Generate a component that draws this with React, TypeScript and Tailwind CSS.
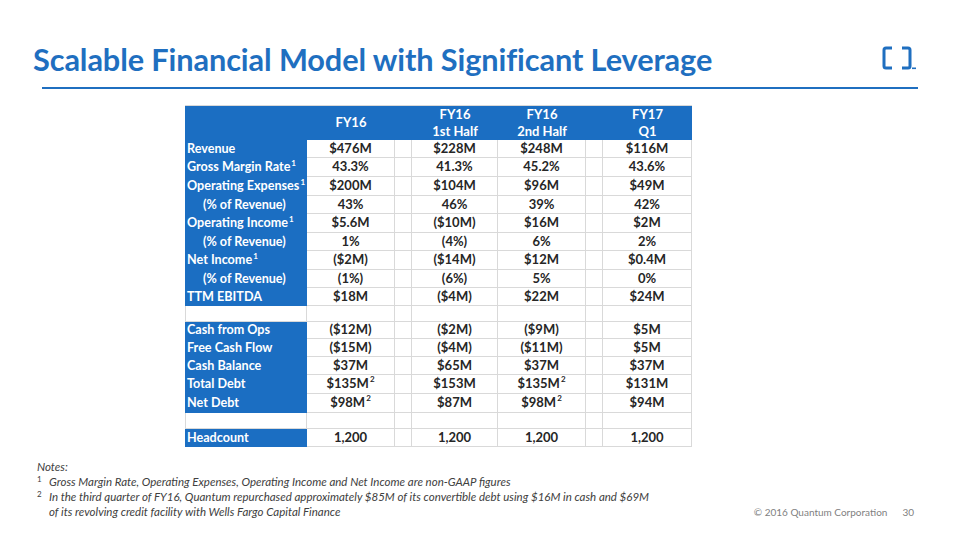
import React from "react";

type Row = {
  label: string;
  sup?: string;
  indent?: boolean;
  blank?: boolean;
  h: number;
  vals?: [string, string, string, string];
  vsup?: [string?, string?, string?, string?];
};

const rows: Row[] = [
  { label: "Revenue", h: 18, vals: ["$476M", "$228M", "$248M", "$116M"] },
  { label: "Gross Margin Rate", sup: "1", h: 19, vals: ["43.3%", "41.3%", "45.2%", "43.6%"] },
  { label: "Operating Expenses", sup: "1", h: 19, vals: ["$200M", "$104M", "$96M", "$49M"] },
  { label: "(% of Revenue)", indent: true, h: 18, vals: ["43%", "46%", "39%", "42%"] },
  { label: "Operating Income", sup: "1", h: 19, vals: ["$5.6M", "($10M)", "$16M", "$2M"] },
  { label: "(% of Revenue)", indent: true, h: 18, vals: ["1%", "(4%)", "6%", "2%"] },
  { label: "Net Income", sup: "1", h: 19, vals: ["($2M)", "($14M)", "$12M", "$0.4M"] },
  { label: "(% of Revenue)", indent: true, h: 18, vals: ["(1%)", "(6%)", "5%", "0%"] },
  { label: "TTM EBITDA", h: 18, vals: ["$18M", "($4M)", "$22M", "$24M"] },
  { label: "", blank: true, h: 16 },
  { label: "Cash from Ops", h: 17, vals: ["($12M)", "($2M)", "($9M)", "$5M"] },
  { label: "Free Cash Flow", h: 18, vals: ["($15M)", "($4M)", "($11M)", "$5M"] },
  { label: "Cash Balance", h: 18, vals: ["$37M", "$65M", "$37M", "$37M"] },
  { label: "Total Debt", h: 19, vals: ["$135M", "$153M", "$135M", "$131M"], vsup: ["2", undefined, "2", undefined] },
  { label: "Net Debt", h: 19, vals: ["$98M", "$87M", "$98M", "$94M"], vsup: ["2", undefined, "2", undefined] },
  { label: "", blank: true, h: 16 },
  { label: "Headcount", h: 18, vals: ["1,200", "1,200", "1,200", "1,200"] },
];

const font = { fontFamily: "Lato, 'Open Sans', sans-serif" };

function Cell({ v, s, w }: { v?: string; s?: string; w: string }) {
  return (
    <div className={`${w} flex items-center justify-center whitespace-nowrap border-r border-b border-[#d9d9d9] text-[13px] font-bold text-[#262626]`}>
      {v}
      {s && <sup className="text-[8px] -top-[5px] ml-[1px]">{s}</sup>}
    </div>
  );
}

function Spacer() {
  return <div className="w-[17px] border-r border-b border-[#d9d9d9]" />;
}

export default function App() {
  return (
    <div className="w-[960px] h-[540px] bg-white relative overflow-hidden flex flex-col" style={font}>
      {/* Title */}
      <div className="flex items-end justify-between pl-[33px] pr-[42px] pt-[40px] h-[84px]">
        <h1 className="text-[30.7px] leading-[36px] font-bold text-[#1f6fc0] tracking-[-0.1px] mb-[6px]">
          Scalable Financial Model with Significant Leverage
        </h1>
        <svg width="36" height="24" viewBox="0 0 36 24" className="mb-[14px]">
          <path d="M10 2 H4 Q2 2 2 4 V20 Q2 22 4 22 H10" fill="none" stroke="#1f6fc0" strokeWidth="3" />
          <path d="M20 2 H26 Q28 2 28 4 V20 Q28 22 26 22 H20" fill="none" stroke="#1f6fc0" strokeWidth="3" />
          <rect x="30" y="21.5" width="4" height="1.6" fill="#1f6fc0" />
        </svg>
      </div>
      <div className="ml-[42px] w-[876px] h-[2px] bg-[#1f6fc0] mt-[3px]" />

      {/* Table */}
      <div className="ml-[185px] mt-[16px] w-[507px] flex flex-col border-t border-[#d9d9d9]">
        {/* header */}
        <div className="flex h-[34px] bg-[#1b6ec2] text-white font-bold text-[13px]">
          <div className="w-[122px]" />
          <div className="w-[88px] flex items-center justify-center">FY16</div>
          <div className="w-[17px]" />
          <div className="w-[86px] flex flex-col items-center justify-center leading-[17px]">
            <span>FY16</span>
            <span>1st Half</span>
          </div>
          <div className="w-[88px] flex flex-col items-center justify-center leading-[17px]">
            <span>FY16</span>
            <span>2nd Half</span>
          </div>
          <div className="w-[17px]" />
          <div className="w-[89px] flex flex-col items-center justify-center leading-[17px]">
            <span>FY17</span>
            <span>Q1</span>
          </div>
        </div>
        {rows.map((r, i) => (
          <div key={i} className="flex" style={{ height: r.h }}>
            <div
              className={`w-[122px] flex items-center whitespace-nowrap text-[12.6px] font-bold text-white ${
                r.blank ? "bg-white border-b border-r border-l border-[#d9d9d9]" : "bg-[#1b6ec2]"
              } ${r.indent ? "pl-[18px]" : "pl-[2px]"}`}
            >
              {r.label}
              {r.sup && <sup className="text-[8px] -top-[5px] ml-[1px]">{r.sup}</sup>}
            </div>
            <Cell w="w-[88px]" v={r.vals?.[0]} s={r.vsup?.[0]} />
            <Spacer />
            <Cell w="w-[86px]" v={r.vals?.[1]} s={r.vsup?.[1]} />
            <Cell w="w-[88px]" v={r.vals?.[2]} s={r.vsup?.[2]} />
            <Spacer />
            <Cell w="w-[89px]" v={r.vals?.[3]} s={r.vsup?.[3]} />
          </div>
        ))}
      </div>

      {/* Notes */}
      <div className="ml-[37px] mt-[12px] text-[11.5px] leading-[15px] italic text-[#404040]">
        <div>Notes:</div>
        <div className="flex">
          <span className="w-[12px] text-[8px] not-italic leading-[10px]">1</span>
          <span>Gross Margin Rate, Operating Expenses, Operating Income and Net Income are non-GAAP figures</span>
        </div>
        <div className="flex">
          <span className="w-[12px] text-[8px] not-italic leading-[10px]">2</span>
          <span>
            In the third quarter of FY16, Quantum repurchased approximately $85M of its convertible debt using $16M in cash and $69M
            <br />
            of its revolving credit facility with Wells Fargo Capital Finance
          </span>
        </div>
      </div>

      {/* Footer */}
      <div className="absolute right-[46px] bottom-[20px] flex gap-[15px] text-[10px] text-[#7f7f7f]">
        <span>© 2016 Quantum Corporation</span>
        <span>30</span>
      </div>
    </div>
  );
}
